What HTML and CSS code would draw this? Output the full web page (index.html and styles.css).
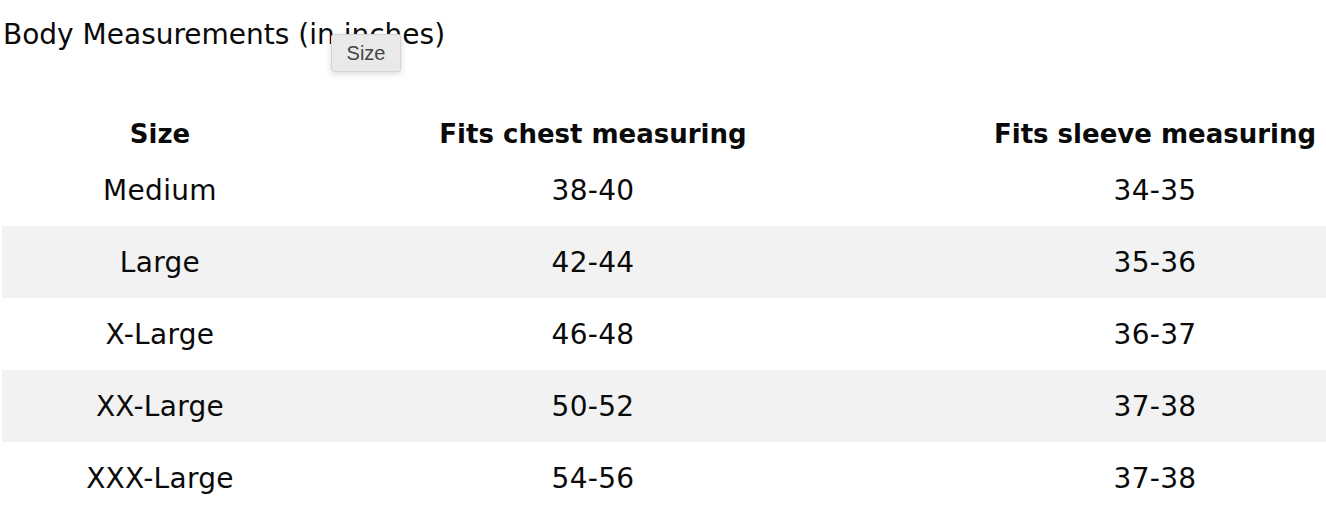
FILE: index.html
```html
<!DOCTYPE html>
<html>
<head>
<meta charset="utf-8">
<link rel="stylesheet" href="styles.css">
</head>
<body>
<div class="page">
  <h2 class="title">Body Measurements (in inches)</h2>
  <table class="sizes">
    <thead>
      <tr><th class="c1">Size</th><th class="c2">Fits chest measuring</th><th class="c3">Fits sleeve measuring</th></tr>
    </thead>
    <tbody>
      <tr><td>Medium</td><td>38-40</td><td>34-35</td></tr>
      <tr class="alt"><td>Large</td><td>42-44</td><td>35-36</td></tr>
      <tr><td>X-Large</td><td>46-48</td><td>36-37</td></tr>
      <tr class="alt"><td>XX-Large</td><td>50-52</td><td>37-38</td></tr>
      <tr><td>XXX-Large</td><td>54-56</td><td>37-38</td></tr>
    </tbody>
  </table>
  <div class="tooltip">Size</div>
</div>
</body>
</html>
```
FILE: styles.css
```css
html, body {
  margin: 0;
  padding: 0;
  background: #fff;
  overflow: hidden;
}
.page {
  position: relative;
  padding: 0 0 0 2px;
  font-family: "DejaVu Sans", sans-serif;
  color: #0a0a0a;
}
.title {
  margin: 0;
  padding: 17px 0 0 1px;
  font-weight: normal;
  font-size: 28px;
  line-height: 36px;
  height: 97px;
  box-sizing: border-box;
}
.sizes {
  border-collapse: collapse;
  width: 1440px;
  table-layout: fixed;
}
.sizes th {
  font-weight: bold;
  font-size: 26px;
  line-height: 30px;
  height: 57px;
  box-sizing: border-box;
  padding: 22px 0 5px;
  text-align: center;
  vertical-align: top;
}
.sizes .c1 { width: 316px; }
.sizes .c2 { width: 550px; }
.sizes .c3 { width: 574px; }
.sizes td {
  font-size: 28px;
  letter-spacing: 0.3px;
  height: 72px;
  padding: 0;
  text-align: center;
  vertical-align: middle;
}
.sizes tr.alt td {
  background: #f2f2f2;
}
.tooltip {
  position: absolute;
  left: 331px;
  top: 34px;
  width: 70px;
  height: 38px;
  box-sizing: border-box;
  background: #e9e9e9;
  border: 1px solid #d4d4d4;
  border-radius: 3px;
  box-shadow: 0 2px 6px rgba(0,0,0,0.15);
  font-family: "Liberation Sans", sans-serif;
  font-size: 20px;
  color: #444;
  text-align: center;
  line-height: 36px;
}
```
